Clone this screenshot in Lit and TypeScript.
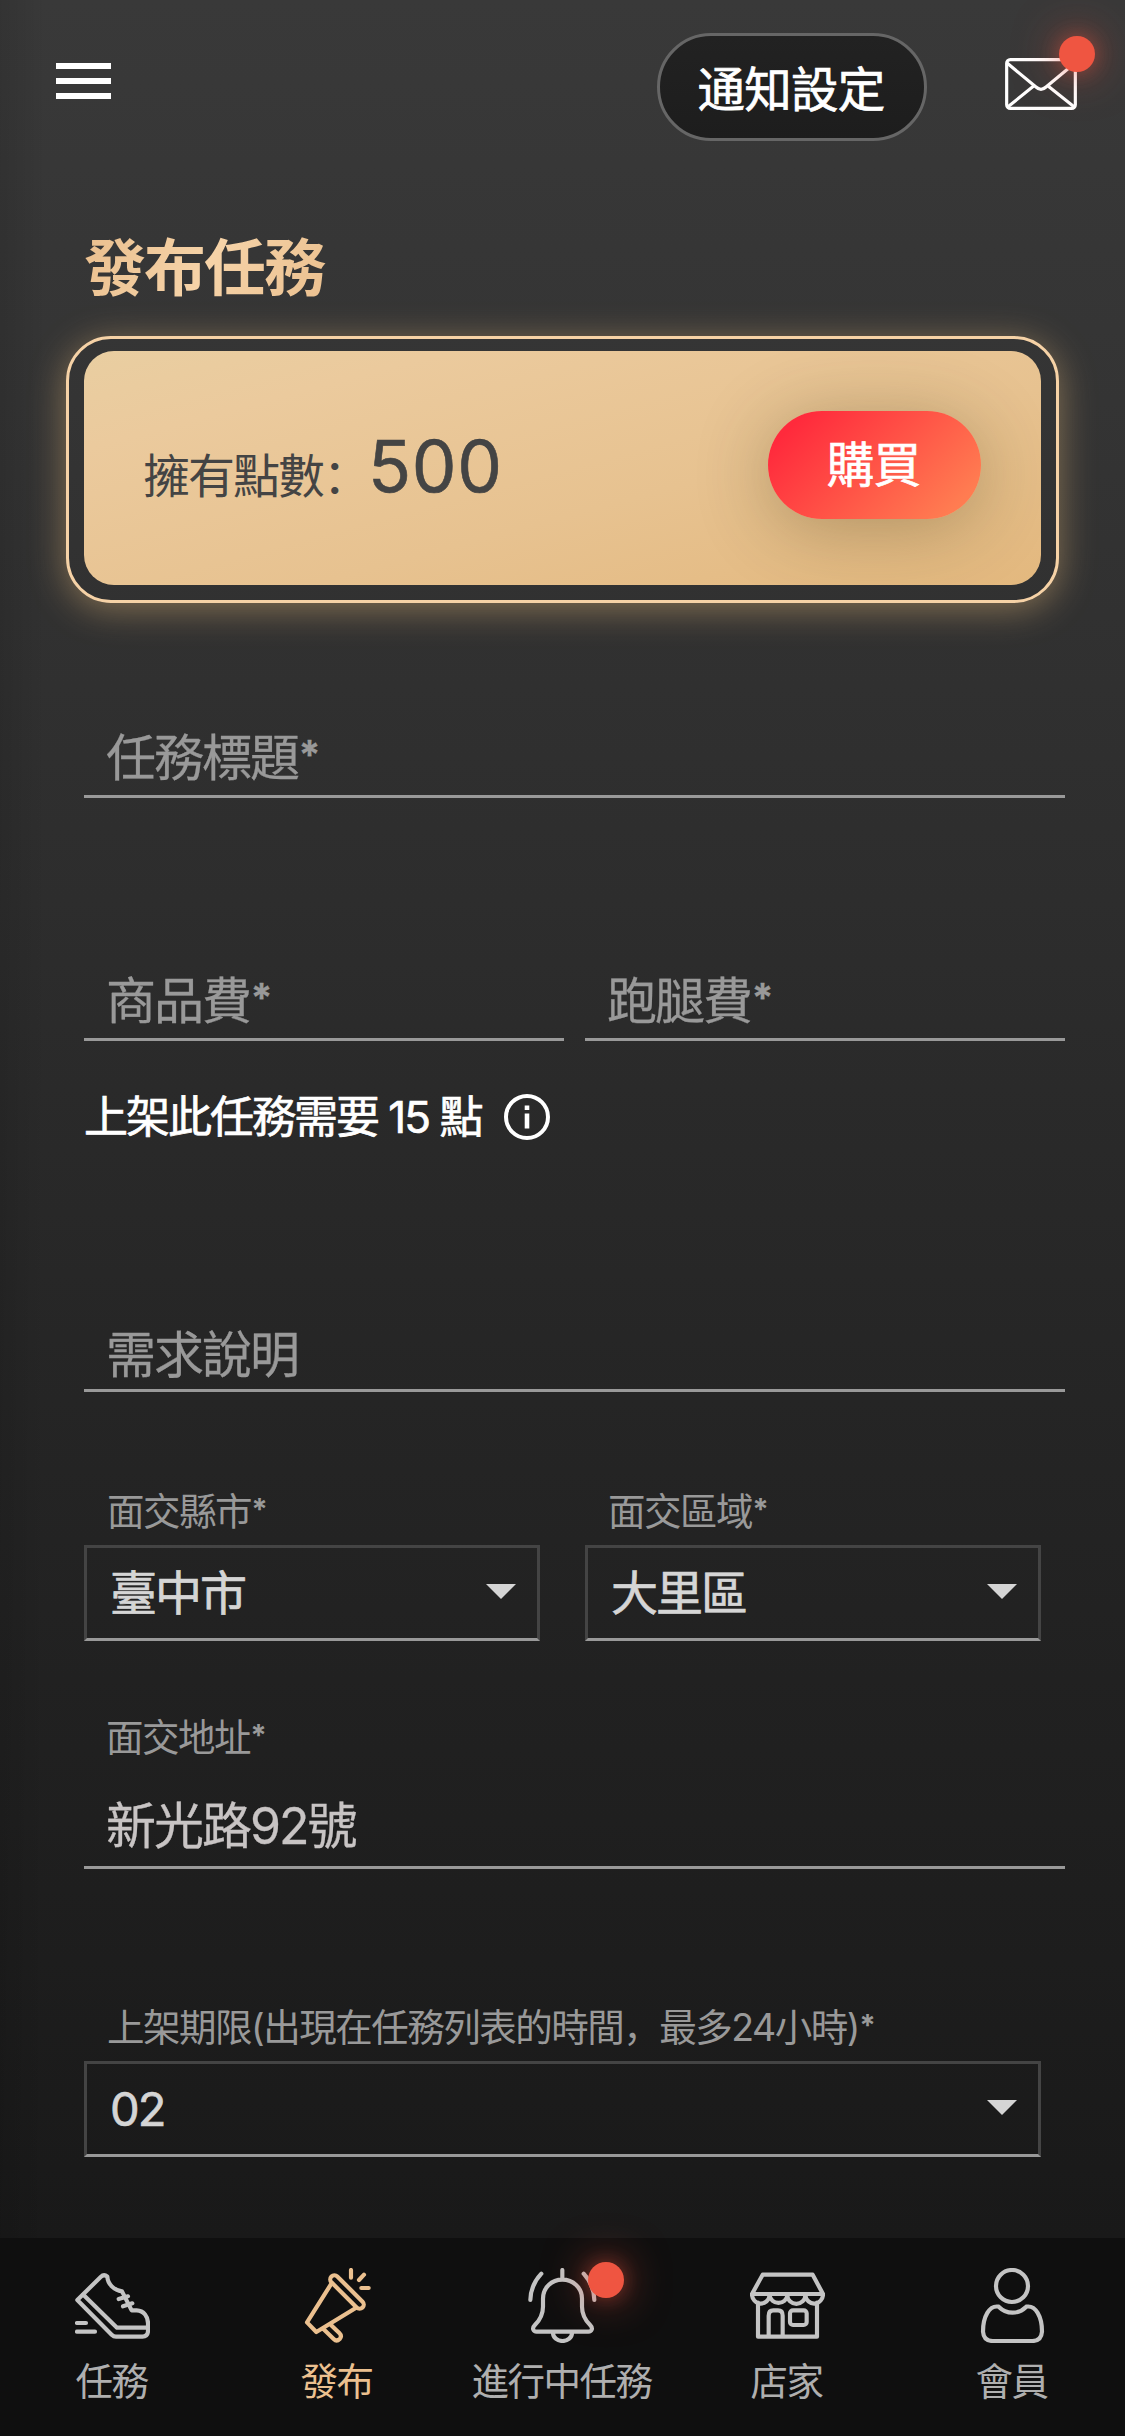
import { LitElement, html, css } from "lit";
import { customElement, property } from "lit/decorators.js";
import { classMap } from "lit/directives/class-map.js";

const icons: Record<string, unknown> = {
  shoe: html`<svg viewBox="225 144 225 225">
    <path d="M232 240L302 171Q312 161 322 170C323 192 342 211 366 214L395 271H410C432 272 444 290 444 310V332Q444 349 427 350H348Q341 350 335 344Z" />
    <path d="M250 224L351 323H444M356 237L384 229M369 259L397 250M231 309H258M231 335H285" />
  </svg>`,
  horn: html`<svg viewBox="900 144 225 225">
    <rect x="975" y="203.500" width="132" height="25" rx="12.500" transform="rotate(45 1041 216)" />
    <path d="M994 191L921 307L949 336L1066 265M971 328L1001 357Q1010 366 1019 357Q1027 348 1018 339L992 314M1053 150V173M1077 180L1092 164M1084 204H1106" />
  </svg>`,
  bell: html`<svg viewBox="435 144 225 225">
    <path d="M547 150V178M547 179C515 179 489 203 489 236V260C489 285 480 300 464 316C455 325 460 335 470 335H625C635 335 640 325 631 316C615 300 606 285 606 260V236C606 203 579 179 547 179ZM519 339A28.500 24 0 0 0 576 339M484 161Q452 195 451 240M611 161Q642 195 643 240" />
  </svg>`,
  store: html`<svg viewBox="90 144 225 225">
    <path d="M128 164H278L309 222H96ZM96 222A26.600 28 0 0 0 149 226A26.600 25 0 0 0 202 226A26.600 25 0 0 0 256 226A26.600 28 0 0 0 309 222M114 248V350H291V248M146 350V287Q146 271 160 271H174Q188 271 188 287V350" />
    <rect x="210" y="271" width="50" height="44" rx="9" />
  </svg>`,
  user: html`<svg viewBox="765 144 225 225">
    <circle cx="876" cy="198" r="48" />
    <path d="M836 260C808 255 789 290 789 335Q791 363 818 363H937Q964 363 966 335C966 290 947 255 919 260C895 284 860 284 836 260Z" />
  </svg>`,
};

const requiredMark = css`
  .req { font-size: 0.79em; font-weight: 700; line-height: 0; vertical-align: 0.18em; margin-left: 0.01em; }
`;

/** Renders a caption, with a trailing asterisk set as a small raised mark. */
const caption = (text: string) =>
  text.endsWith("*") ? html`${text.slice(0, -1)}<span class="req">*</span>` : html`${text}`;

@customElement("form-select")
class FormSelect extends LitElement {
  @property() label = "";
  @property() value = "";

  static styles = [requiredMark, css`
    :host { display: block; }
    .label { height: 54px; line-height: 54px; padding-left: 23px; margin-bottom: 6px; font-size: 37.5px; letter-spacing: -1.5px; color: #999; white-space: nowrap; }
    .box { height: 96px; box-sizing: border-box; border: 3px solid #444; border-bottom-color: #999; padding: 0 21px 3px 23px; display: flex; align-items: center; justify-content: space-between; font-size: 47px; line-height: 60px; color: #d5d5d5; -webkit-text-stroke: 0.7px #d5d5d5; }
    .value { height: 60px; padding-top: 1px; box-sizing: border-box; }
    .arrow { width: 30px; height: 15px; display: block; fill: #d5d5d5; }
  `];

  render() {
    return html`
      <div class="label">${caption(this.label)}</div>
      <div class="box">
        <div class="value">${this.value}</div>
        <svg class="arrow" viewBox="0 0 30 15"><path d="M0 0H30L15 15Z" /></svg>
      </div>`;
  }
}

@customElement("form-field")
class FormField extends LitElement {
  @property() text = "";

  static styles = [requiredMark, css`
    :host { display: block; height: 78px; box-sizing: border-box; border-bottom: 3px solid #999; padding: 1px 0 0 22px; line-height: 74px; font-size: 50px; color: #999; white-space: nowrap; -webkit-text-stroke: 0.3px currentColor; }
  `];

  render() {
    return caption(this.text);
  }
}

@customElement("nav-tab")
class NavTab extends LitElement {
  @property() icon = "";
  @property() label = "";
  @property({ type: Boolean }) active = false;
  @property({ type: Boolean }) badge = false;

  static styles = css`
    :host { display: block; flex: 1 1 0; }
    .tab { display: flex; flex-direction: column; align-items: center; padding-top: 30px; color: #afafaf; }
    .icon { position: relative; width: 75px; height: 75px; color: #c4c4c4; }
    .icon svg { display: block; width: 75px; height: 75px; fill: none; stroke: currentColor; stroke-width: 12.5px; stroke-linecap: round; stroke-linejoin: round; }
    .label { margin: 12px 2px 0 0; height: 54px; line-height: 54px; font-size: 37.5px; letter-spacing: -1.5px; white-space: nowrap; }
    .active, .active .icon { color: #ebc08f; }
    .badge { position: absolute; left: 63px; top: -6px; width: 36px; height: 36px; border-radius: 50%; background: #ef5541; box-shadow: 0 0 45px rgba(239, 85, 65, 0.6), 0 0 20px rgba(239, 85, 65, 0.4); }
  `;

  render() {
    return html`
      <div class=${classMap({ tab: true, active: this.active })}>
        <div class="icon">${icons[this.icon]}${this.badge ? html`<span class="badge"></span>` : ""}</div>
        <div class="label">${this.label}</div>
      </div>`;
  }
}

@customElement("app-root")
class AppRoot extends LitElement {
  static styles = [requiredMark, css`
    :host { display: block; }
    .page {
      width: 1125px; height: 2436px; overflow: hidden; display: flex; flex-direction: column;
      font-family: Inter, "Noto Sans CJK SC", "Noto Sans CJK TC", sans-serif; letter-spacing: -2px;
      background:
        linear-gradient(90deg, rgba(0, 0, 0, 0.1), rgba(0, 0, 0, 0) 46px),
        linear-gradient(180deg, #393939 0, #353535 330px, #2d2d2d 900px, #252525 1400px, #1d1d1d 1960px, #191919 2238px);
    }
    header { height: 223px; box-sizing: border-box; padding: 33px 48px 0 56px; display: flex; align-items: flex-start; }
    .menu { margin-top: 30px; display: flex; flex-direction: column; gap: 9px; }
    .menu i { width: 55px; height: 6px; background: #fff; }
    .notify { margin-left: auto; width: 270px; height: 108px; box-sizing: border-box; border: 3px solid #666; border-radius: 54px; background: linear-gradient(180deg, #222, #1d1d1d); color: #fff; font-size: 47.5px; letter-spacing: -0.7px; text-align: center; line-height: 108px; padding-right: 2px; -webkit-text-stroke: 0.7px #fff; }
    .mail { position: relative; margin: 25px 0 0 78px; width: 72px; height: 52px; }
    .mail svg { display: block; width: 72px; height: 52px; fill: none; stroke: #fff; stroke-width: 9.5px; stroke-linejoin: round; }
    .dot { position: absolute; left: 54px; top: -22px; width: 36px; height: 36px; border-radius: 50%; background: #ef5541; box-shadow: 0 0 45px rgba(239, 85, 65, 0.6), 0 0 20px rgba(239, 85, 65, 0.4); }
    h1 { margin: 0 0 23px; padding-left: 84px; height: 90px; line-height: 91px; font-size: 62px; font-weight: 700; }
    h1 span { background: linear-gradient(115deg, #eabf8e, #f6d3a8 50%, #eabf8e); -webkit-background-clip: text; background-clip: text; color: transparent; padding-right: 6px; }
    .card { margin: 0 66px; height: 267px; box-sizing: border-box; border: 3px solid #f6d2a6; border-radius: 45px; padding: 12px 15px 15px; box-shadow: 0 6px 36px rgba(235, 190, 125, 0.46); }
    .points { height: 234px; box-sizing: border-box; border-radius: 30px; padding: 0 60px; overflow: hidden; background: linear-gradient(165deg, #e9cea1, #ebca9d 20%, #e7c290 60%, #e3b87e); display: flex; align-items: center; color: #444; }
    .own { margin-left: -1px; font-size: 47px; height: 60px; line-height: 60px; padding-top: 15px; }
    .num { font-size: 71px; line-height: 90px; margin: -4px 0 0; letter-spacing: 0.6px; -webkit-text-stroke: 0.6px #444; }
    .buy { margin-left: auto; margin-top: -6px; width: 211px; height: 108px; padding-right: 2px; border-radius: 54px; background: linear-gradient(135deg, #ff2a3c 12%, #ff7c51 88%); box-shadow: 0 9px 75px rgba(60, 50, 20, 0.32); color: #fff; font-size: 47.5px; letter-spacing: -0.7px; text-align: center; line-height: 108px; -webkit-text-stroke: 0.7px #fff; }
    .form { padding: 117px 60px 0 84px; flex: 1; }
    .fees { margin-top: 165px; display: grid; grid-template-columns: 480px 480px; gap: 21px; }
    .cost { margin-top: 46px; height: 60px; line-height: 60px; display: flex; align-items: center; font-size: 44px; color: #fff; white-space: pre; -webkit-text-stroke: 0.7px #fff; }
    .cost svg { display: block; width: 48px; height: 48px; margin-left: auto; -webkit-text-stroke: 0; }
    .cost { width: 467px; }
    .desc { margin-top: 170px; height: 75px; line-height: 72px; padding-top: 2px; }
    .areas { margin-top: 93px; display: grid; grid-template-columns: 456px 456px; gap: 45px; }
    .addr-label { margin-top: 70px; height: 54px; line-height: 54px; padding-left: 22px; font-size: 37.5px; letter-spacing: -1.5px; color: #999; }
    .addr { margin-top: 22px; height: 82px; line-height: 77px; color: #c8c4c4; }
    .limit { margin: 132px 24px 0 0; }
    nav { height: 198px; background: #0f0f0f; display: flex; }
  `];

  render() {
    return html`
      <div class="page">
        <header>
          <div class="menu"><i></i><i></i><i></i></div>
          <div class="notify">通知設定</div>
          <div class="mail">
            <svg viewBox="1095 144 216 156">
              <rect x="1100" y="149" width="206" height="146" rx="11" />
              <path d="M1102 160L1188 231Q1203 245 1218 231L1304 160M1103 291L1180 229M1303 291L1225 229" />
            </svg>
            <span class="dot"></span>
          </div>
        </header>
        <h1><span>發布任務</span></h1>
        <section class="card">
          <div class="points">
            <div class="own">擁有點數：</div>
            <div class="num">500</div>
            <div class="buy">購買</div>
          </div>
        </section>
        <main class="form">
          <form-field text="任務標題*"></form-field>
          <div class="fees">
            <form-field text="商品費*"></form-field>
            <form-field text="跑腿費*"></form-field>
          </div>
          <div class="cost">
            <div>上架此任務需要 15 點</div>
            <svg viewBox="0 0 48 48">
              <circle cx="24" cy="24" r="21" fill="none" stroke="#fff" stroke-width="4" />
              <path d="M21.700 12.500h4.600v4.600h-4.600zM21.700 20.500h4.600v15h-4.600z" fill="#fff" />
            </svg>
          </div>
          <form-field class="desc" text="需求說明"></form-field>
          <div class="areas">
            <form-select label="面交縣市*" value="臺中市"></form-select>
            <form-select label="面交區域*" value="大里區"></form-select>
          </div>
          <div class="addr-label">${caption("面交地址*")}</div>
          <form-field class="addr" text="新光路92號"></form-field>
          <form-select class="limit" label="上架期限(出現在任務列表的時間，最多24小時)*" value="02"></form-select>
        </main>
        <nav>
          <nav-tab icon="shoe" label="任務"></nav-tab>
          <nav-tab icon="horn" label="發布" active></nav-tab>
          <nav-tab icon="bell" label="進行中任務" badge></nav-tab>
          <nav-tab icon="store" label="店家"></nav-tab>
          <nav-tab icon="user" label="會員"></nav-tab>
        </nav>
      </div>`;
  }
}
